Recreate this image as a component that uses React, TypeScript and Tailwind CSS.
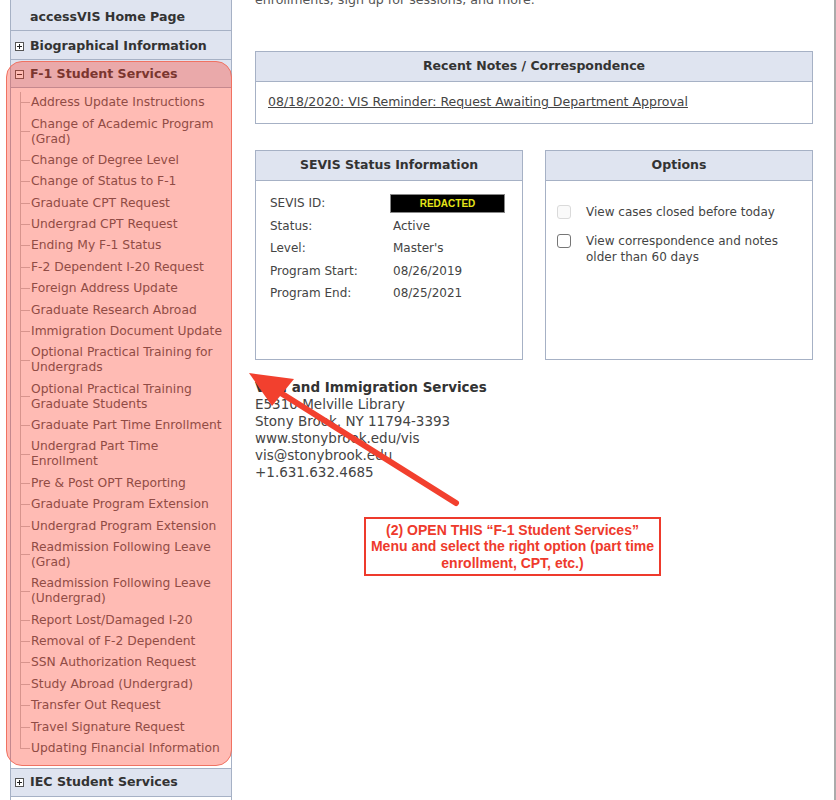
import React from 'react';

const items: string[][] = [
  ['Address Update Instructions'],
  ['Change of Academic Program', '(Grad)'],
  ['Change of Degree Level'],
  ['Change of Status to F-1'],
  ['Graduate CPT Request'],
  ['Undergrad CPT Request'],
  ['Ending My F-1 Status'],
  ['F-2 Dependent I-20 Request'],
  ['Foreign Address Update'],
  ['Graduate Research Abroad'],
  ['Immigration Document Update'],
  ['Optional Practical Training for', 'Undergrads'],
  ['Optional Practical Training', 'Graduate Students'],
  ['Graduate Part Time Enrollment'],
  ['Undergrad Part Time', 'Enrollment'],
  ['Pre & Post OPT Reporting'],
  ['Graduate Program Extension'],
  ['Undergrad Program Extension'],
  ['Readmission Following Leave', '(Grad)'],
  ['Readmission Following Leave', '(Undergrad)'],
  ['Report Lost/Damaged I-20'],
  ['Removal of F-2 Dependent'],
  ['SSN Authorization Request'],
  ['Study Abroad (Undergrad)'],
  ['Transfer Out Request'],
  ['Travel Signature Request'],
  ['Updating Financial Information'],
];

const sevis = [
  ['Status:', 'Active'],
  ['Level:', "Master's"],
  ['Program Start:', '08/26/2019'],
  ['Program End:', '08/25/2021'],
];

function BoxIcon({ open }: { open?: boolean }) {
  return (
    <svg width="9" height="9" viewBox="0 0 9 9" className="shrink-0">
      <rect x="0.5" y="0.5" width="8" height="8" fill="#fff" stroke="#555" />
      <line x1="2" y1="4.5" x2="7" y2="4.5" stroke="#222" />
      {!open && <line x1="4.5" y1="2" x2="4.5" y2="7" stroke="#222" />}
    </svg>
  );
}

function Sidebar() {
  return (
    <div className="ml-[10px] w-[222px] shrink-0 border-x border-[#a6b1c5] flex flex-col text-[12.3px]">
      <div className="h-[31px] pt-[5px] bg-[#dfe4f0] border-b border-[#a6b1c5] flex items-center pl-[19px] font-bold text-[12.6px] text-[#333]">
        accessVIS Home Page
      </div>
      <div className="h-[29px] pt-[2px] bg-[#dfe4f0] border-b border-[#a6b1c5] flex items-center gap-[6px] pl-[4px] font-bold text-[12.6px] text-[#333]">
        <BoxIcon />
        Biographical Information
      </div>
      <div className="h-[28px] pt-[1px] bg-[#dfe4f0] border-b border-[#a6b1c5] flex items-center gap-[6px] pl-[4px] font-bold text-[12.6px] text-[#333]">
        <BoxIcon open />
        F-1 Student Services
      </div>
      <ul className="pt-[4px] pb-[9px]">
        {items.map((lines, i) => {
          const last = i === items.length - 1;
          return (
            <li key={i} className="flex">
              <div className="ml-[9px] w-[10px] shrink-0 flex flex-col">
                <div className="flex-1 border-l border-[#c4c4c4]" />
                <div className={`flex-1 border-t border-[#c4c4c4] ${last ? '' : 'border-l'}`} />
              </div>
              <div className="pl-[1px] py-[3.2px] leading-[15px] text-[#555]">
                {lines.map((l, j) => (
                  <div key={j}>{l}</div>
                ))}
              </div>
            </li>
          );
        })}
      </ul>
      <div className="h-[29px] bg-[#dfe4f0] border-y border-[#a6b1c5] flex items-center gap-[6px] pl-[4px] font-bold text-[12.6px] text-[#333]">
        <BoxIcon />
        IEC Student Services
      </div>
    </div>
  );
}

function Header({ children }: { children: React.ReactNode }) {
  return (
    <div className="h-[30px] bg-[#dfe4f0] border-b border-[#a6b1c5] flex items-center justify-center font-bold text-[12.5px] text-[#333]">
      {children}
    </div>
  );
}

export default function App() {
  return (
    <div
      className="relative w-[836px] h-[800px] overflow-hidden bg-white flex border-r-2 border-[#ababab]"
      style={{ fontFamily: '"DejaVu Sans", Verdana, sans-serif' }}
    >
      <Sidebar />

      <div className="ml-[23px] w-[558px] shrink-0 flex flex-col text-[12px] text-[#444]">
        <p className="-mt-[9px] leading-[17px] text-[12.6px] text-[#555]">
          enrollments, sign up for sessions, and more.
        </p>

        <div className="mt-[43px] border border-[#a6b1c5]">
          <Header>Recent Notes / Correspondence</Header>
          <div className="h-[41px] flex items-center pl-[12px]">
            <span className="underline text-[12.5px] text-[#444]">08/18/2020: VIS Reminder: Request Awaiting Department Approval</span>
          </div>
        </div>

        <div className="mt-[26px] flex gap-[22px]">
          <div className="w-[268px] h-[210px] border border-[#a6b1c5]">
            <Header>SEVIS Status Information</Header>
            <div className="pt-[11px] pl-[14px] text-[#444]">
              <div className="flex items-center h-[22.5px]">
                <span className="w-[120px]">SEVIS ID:</span>
                <span className="w-[115px] h-[19px] bg-black border border-[#888] flex items-center justify-center text-[#e6e61a] font-bold text-[10px]" style={{ fontFamily: '"Liberation Sans", Arial, sans-serif' }}>
                  REDACTED
                </span>
              </div>
              {sevis.map(([k, v]) => (
                <div key={k} className="flex items-center h-[22.5px]">
                  <span className="w-[123px]">{k}</span>
                  <span>{v}</span>
                </div>
              ))}
            </div>
          </div>

          <div className="w-[268px] h-[210px] border border-[#a6b1c5]">
            <Header>Options</Header>
            <div className="pt-[23px] pl-[11px] pr-[8px] flex flex-col gap-[13px] text-[#444] leading-[16px]">
              <div className="flex items-start gap-[15px]">
                <span className="mt-[1px] w-[14px] h-[14px] rounded-[3px] border border-[#dadada] bg-[#fafafa] shrink-0" />
                <span>View cases closed before today</span>
              </div>
              <div className="flex items-start gap-[15px]">
                <span className="mt-[1px] w-[14px] h-[14px] rounded-[3px] border border-[#767676] bg-white shrink-0" />
                <span>
                  View correspondence and notes
                  <br />
                  older than 60 days
                </span>
              </div>
            </div>
          </div>
        </div>

        <div className="mt-[19px] text-[13.5px] leading-[17px] text-[#444]">
          <div className="font-bold text-[#333]">Visa and Immigration Services</div>
          <div>E5310 Melville Library</div>
          <div>Stony Brook, NY 11794-3393</div>
          <div>www.stonybrook.edu/vis</div>
          <div>vis@stonybrook.edu</div>
          <div>+1.631.632.4685</div>
        </div>
      </div>

      {/* highlight over the F-1 menu */}
      <div className="pointer-events-none absolute left-[6px] top-[61px] w-[226px] h-[705px] rounded-[16px] bg-[rgba(255,60,40,0.35)] border-[1.5px] border-[#f07262]" />

      {/* arrow */}
      <svg className="pointer-events-none absolute left-0 top-0" width="836" height="800">
        <line x1="456" y1="503" x2="276" y2="390" stroke="#f2402e" strokeWidth="6" strokeLinecap="round" />
        <polygon points="249,373 294,379 272,406" fill="#f2402e" />
      </svg>

      {/* callout */}
      <div
        className="absolute left-[364px] top-[517px] w-[297px] h-[59px] bg-white border-2 border-[#ee3a2c] flex flex-col items-center justify-center text-[#ee3a2c] font-bold text-[14px] leading-[16.5px] text-center whitespace-nowrap"
        style={{ fontFamily: '"Liberation Sans", Arial, sans-serif' }}
      >
        <div>(2) OPEN THIS “F-1 Student Services”</div>
        <div>Menu and select the right option (part time</div>
        <div>enrollment, CPT, etc.)</div>
      </div>
    </div>
  );
}
